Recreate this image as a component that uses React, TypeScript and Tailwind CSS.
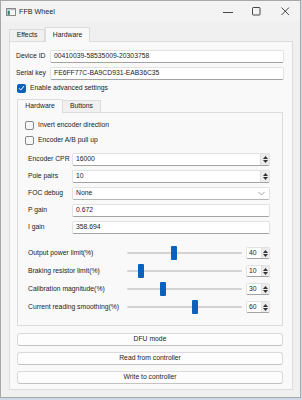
import React from 'react'

const font = '[font-family:Liberation_Sans,Arial,sans-serif] text-[6.8px] leading-none text-[#1b1b1b]'

function TitleBar() {
  return (
    <div className="h-[21px] bg-[#f3f3f3] flex items-center relative">
      {/* app icon */}
      <svg width="10" height="8" viewBox="0 0 10 8" className="ml-[5px]">
        <rect x="0.5" y="0.5" width="9" height="7" fill="#f6f6f6" stroke="#8a8a8a" />
        <rect x="1" y="1" width="8" height="1.2" fill="#b9c4cc" />
        <rect x="1.6" y="2.8" width="2.2" height="4" fill="#2f7d6d" />
      </svg>
      <span className="ml-[3px] text-[7.2px]">FFB Wheel</span>
      <div className="ml-auto flex items-center h-full">
        <div className="w-[29px] h-full flex items-center justify-center">
          <svg width="10" height="10" viewBox="0 0 10 10">
            <line x1="0" y1="5.5" x2="10" y2="5.5" stroke="#1b1b1b" strokeWidth="0.8" />
          </svg>
        </div>
        <div className="w-[29px] h-full flex items-center justify-center">
          <svg width="9" height="9" viewBox="0 0 9 9">
            <rect x="0.5" y="0.5" width="7.5" height="7.5" rx="0.8" fill="none" stroke="#1b1b1b" strokeWidth="0.8" />
          </svg>
        </div>
        <div className="w-[29px] h-full flex items-center justify-center">
          <svg width="9" height="9" viewBox="0 0 9 9">
            <path d="M0.5 0.5 L8 8 M8 0.5 L0.5 8" stroke="#1b1b1b" strokeWidth="0.8" />
          </svg>
        </div>
      </div>
    </div>
  )
}

function TextField({ value }: { value: string }) {
  return (
    <div className="flex-1 h-[13px] bg-white border border-[#e2e2e2] border-b-[#a3a3a3] rounded-[2px] flex items-center px-[3px]">
      {value}
    </div>
  )
}

function Arrows({ w }: { w: string }) {
  return (
    <div className={`${w} h-full flex flex-col items-center justify-center gap-[1px] bg-[#ebebeb] border-l border-[#e2e2e2]`}>
      <svg width="5" height="3" viewBox="0 0 5 3">
        <path d="M2.5 0 L5 3 L0 3 Z" fill="#333" />
      </svg>
      <svg width="5" height="3" viewBox="0 0 5 3">
        <path d="M0 0 L5 0 L2.5 3 Z" fill="#333" />
      </svg>
    </div>
  )
}

function SpinBox({ value, className }: { value: string; className: string }) {
  return (
    <div className={`${className} h-[13px] bg-white border border-[#e2e2e2] border-b-[#a3a3a3] rounded-[2px] flex items-center overflow-hidden`}>
      <span className="flex-1 pl-[3px]">{value}</span>
      <Arrows w="w-[9px]" />
    </div>
  )
}

function ComboBox({ value }: { value: string }) {
  return (
    <div className="flex-1 h-[13px] bg-white border border-[#e2e2e2] border-b-[#b5b5b5] rounded-[2px] flex items-center px-[3px]">
      <span className="flex-1">{value}</span>
      <svg width="7" height="5" viewBox="0 0 7 5" className="mr-[1px]">
        <path d="M0.5 1 L3.5 4 L6.5 1" fill="none" stroke="#8a8a8a" strokeWidth="0.8" />
      </svg>
    </div>
  )
}

function CheckBox({ checked, label }: { checked?: boolean; label: string }) {
  return (
    <div className="flex items-center gap-[4px] h-[9px]">
      {checked ? (
        <div className="w-[9px] h-[9px] rounded-[2px] bg-[#0a62bd] flex items-center justify-center">
          <svg width="7" height="6" viewBox="0 0 7 6">
            <path d="M1 3.2 L2.8 5 L6 1" fill="none" stroke="white" strokeWidth="1" />
          </svg>
        </div>
      ) : (
        <div className="w-[9px] h-[9px] rounded-[2px] border border-[#878787] bg-[#f7f7f7]" />
      )}
      <span>{label}</span>
    </div>
  )
}

function Slider({ label, value }: { label: string; value: number }) {
  return (
    <div className="flex items-center h-[12px]">
      <span className="w-[99px]">{label}</span>
      <div className="relative w-[115px] h-[14px]">
        <div className="absolute left-0 right-0 top-[6px] h-[2px] rounded-full bg-[#d3d3d3]" />
        <div
          className="absolute top-0 w-[6px] h-[14px] rounded-[1px] bg-[#0a62bd]"
          style={{ left: `${Math.round((value / 100) * 109)}px` }}
        />
      </div>
      <div className="ml-[4px] w-[24px] h-[12px] bg-white border border-[#e2e2e2] border-b-[#a3a3a3] rounded-[2px] flex items-center overflow-hidden">
        <span className="flex-1 pl-[2px]">{value}</span>
        <Arrows w="w-[8px]" />
      </div>
    </div>
  )
}

function PushButton({ label }: { label: string }) {
  return (
    <div className="ml-[1px] w-[266px] h-[13px] bg-[#fdfdfd] border border-[#dadada] border-b-[#c2c2c2] rounded-[3px] flex items-center justify-center">
      {label}
    </div>
  )
}

export default function App() {
  return (
    <div className={`w-[302px] h-[400px] bg-[#cdd9e6] ${font}`}>
      <div className="w-[301px] h-[398px] border border-[#a8a8a8] bg-[#f0f0f0] flex flex-col">
        <TitleBar />

        {/* outer tabs */}
        <div className="pt-[5px] pl-[8px]">
          <div className="flex items-end h-[14px]">
            <div className="w-[36px] h-[12px] border border-b-0 border-[#dcdcdc] bg-[#f0f0f0] flex items-center justify-center">
              Effects
            </div>
            <div className="relative z-10 -mb-px w-[45px] h-[15px] border border-b-0 border-[#dcdcdc] bg-[#f9f9f9] flex items-center justify-center">
              Hardware
            </div>
          </div>

          <div className="w-[284px] h-[349px] border border-[#dcdcdc] bg-[#f9f9f9] pt-[8px] pl-[6px] pr-[8px] flex flex-col">
            <div className="flex items-center">
              <span className="w-[34px]">Device ID</span>
              <TextField value="00410039-58535009-20303758" />
            </div>
            <div className="flex items-center mt-[4px]">
              <span className="w-[34px]">Serial key</span>
              <TextField value="FE6FF77C-BA9CD931-EAB36C35" />
            </div>
            <div className="mt-[3px] ml-[1px] h-[10px] flex items-center">
              <CheckBox checked label="Enable advanced settings" />
            </div>

            {/* inner tabs */}
            <div className="mt-[6px] ml-[1px] w-[266px]">
              <div className="flex items-end h-[13px]">
                <div className="relative z-10 -mb-px w-[46px] h-[14px] border border-b-0 border-[#dcdcdc] bg-[#f9f9f9] flex items-center justify-center">
                  Hardware
                </div>
                <div className="w-[38px] h-[12px] border border-b-0 border-l-0 border-[#dcdcdc] bg-[#f0f0f0] flex items-center justify-center">
                  Buttons
                </div>
              </div>

              <div className="h-[214px] border border-[#dcdcdc] bg-[#f9f9f9] pt-[8px] flex flex-col">
                <div className="pl-[7px] flex flex-col gap-[6px]">
                  <CheckBox label="Invert encoder direction" />
                  <CheckBox label="Encoder A/B pull up" />
                </div>

                <div className="pl-[10px] mt-[8px] flex flex-col gap-[4px]">
                  <div className="flex items-center">
                    <span className="w-[44px]">Encoder CPR</span>
                    <SpinBox value="16000" className="w-[198px]" />
                  </div>
                  <div className="flex items-center">
                    <span className="w-[44px]">Pole pairs</span>
                    <SpinBox value="10" className="w-[198px]" />
                  </div>
                  <div className="flex items-center w-[242px]">
                    <span className="w-[44px]">FOC debug</span>
                    <ComboBox value="None" />
                  </div>
                  <div className="flex items-center w-[242px]">
                    <span className="w-[44px]">P gain</span>
                    <TextField value="0.672" />
                  </div>
                  <div className="flex items-center w-[242px]">
                    <span className="w-[44px]">I gain</span>
                    <TextField value="358.694" />
                  </div>
                </div>

                <div className="pl-[10px] mt-[13px] flex flex-col gap-[6px]">
                  <Slider label="Output power limit(%)" value={40} />
                  <Slider label="Braking resistor limit(%)" value={10} />
                  <Slider label="Calibration magnitude(%)" value={30} />
                  <Slider label="Current reading smoothing(%)" value={60} />
                </div>
              </div>
            </div>

            <div className="mt-[7px] flex flex-col gap-[6px]">
              <PushButton label="DFU mode" />
              <PushButton label="Read from controller" />
              <PushButton label="Write to controller" />
            </div>
          </div>
        </div>
      </div>
    </div>
  )
}
